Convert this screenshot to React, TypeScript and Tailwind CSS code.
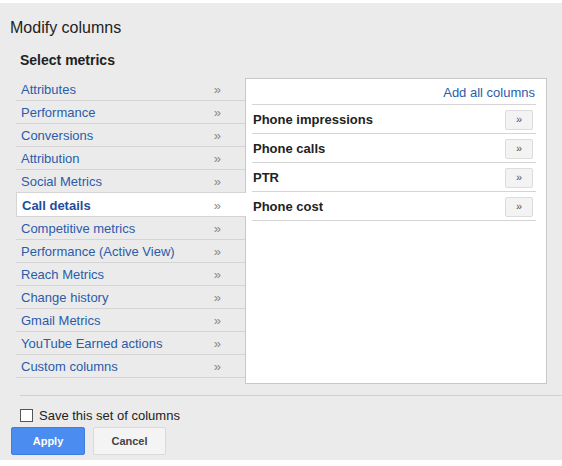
import React from "react";

const metrics = [
  "Attributes",
  "Performance",
  "Conversions",
  "Attribution",
  "Social Metrics",
  "Call details",
  "Competitive metrics",
  "Performance (Active View)",
  "Reach Metrics",
  "Change history",
  "Gmail Metrics",
  "YouTube Earned actions",
  "Custom columns",
];

const columns = ["Phone impressions", "Phone calls", "PTR", "Phone cost"];

export default function App() {
  return (
    <div
      className="h-[466px] w-[562px] bg-white overflow-hidden"
      style={{ fontFamily: '"Liberation Sans", Arial, sans-serif' }}
    >
      <div className="mt-[3px] h-[457px] bg-[#ebebeb] flex flex-col">
        <div className="pl-[10px] pt-[15px] text-[16px] leading-[20px] text-[#222]">
          Modify columns
        </div>
        <div className="pl-[20px] mt-[13px] text-[14px] leading-[18px] font-bold text-[#222]">
          Select metrics
        </div>
        <div className="flex mt-[9px] ml-[16px]">
          <div className="w-[229px] flex flex-col">
            {metrics.map((m) => {
              const sel = m === "Call details";
              return sel ? (
                <div
                  key={m}
                  className="relative z-10 -mr-[1px] h-[24px] bg-white border-l border-b border-[#d4d4d4] flex items-center pt-[2px] pl-[5px] pr-[25px] justify-between"
                >
                  <span className="text-[13px] font-bold text-[#1f4d9c]">{m}</span>
                  <span className="text-[13px] text-[#8a8a8a]">»</span>
                </div>
              ) : (
                <div
                  key={m}
                  className="h-[23px] border-b border-[#d4d4d4] flex items-center pt-[1px] pl-[5px] pr-[24px] justify-between"
                >
                  <span className="text-[13px] text-[#2a5caa]">{m}</span>
                  <span className="text-[13px] text-[#8a8a8a]">»</span>
                </div>
              );
            })}
          </div>
          <div className="w-[302px] h-[306px] bg-white border border-[#c8c8c8] pl-[6px] pr-[10px]">
            <div className="h-[26px] border-b border-[#d4d4d4] flex items-center justify-end pt-[3px]">
              <span className="text-[13px] text-[#2a5caa] mr-[1px]">Add all columns</span>
            </div>
            {columns.map((c) => (
              <div
                key={c}
                className="h-[29px] border-b border-[#d4d4d4] flex items-center justify-between pt-[1px] pl-[1px] pr-[3px]"
              >
                <span className="text-[13px] font-bold text-[#222]">{c}</span>
                <span className="w-[28px] h-[20px] bg-[#f3f3f3] border border-[#dcdcdc] rounded-[2px] flex items-center justify-center text-[11px] text-[#555]">
                  »
                </span>
              </div>
            ))}
          </div>
        </div>
        <div className="ml-[20px] mt-[11px] border-t border-[#d0d0d0]" />
        <div className="flex items-center ml-[20px] mt-[12px] gap-[6px]">
          <span className="w-[13px] h-[13px] border border-[#555] bg-white" />
          <span className="text-[13px] text-[#222] leading-[15px]">Save this set of columns</span>
        </div>
        <div className="flex ml-[11px] mt-[4px] gap-[8px]">
          <button className="w-[74px] h-[28px] rounded-[2px] bg-[#4a8cf0] border border-[#3f7de0] text-white text-[11px] font-bold">
            Apply
          </button>
          <button className="w-[73px] h-[28px] rounded-[2px] bg-[#f4f4f4] border border-[#dadada] text-[#444] text-[11px] font-bold">
            Cancel
          </button>
        </div>
      </div>
    </div>
  );
}
